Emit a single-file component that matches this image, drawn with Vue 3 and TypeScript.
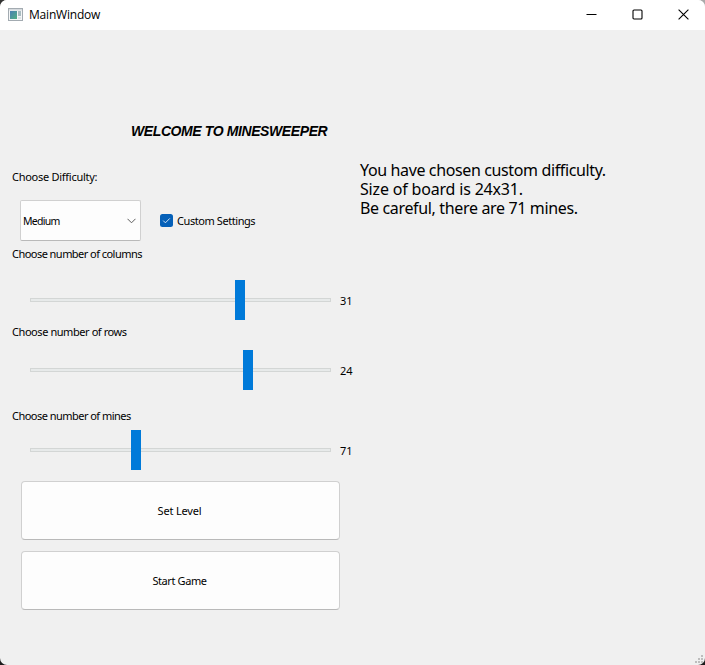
<script setup lang="ts">
import { computed, ref } from 'vue'

interface Slider {
  id: string
  label: string
  value: number
  ratio: number
}

const sliders = ref<Slider[]>([
  { id: 'columns', label: 'Choose number of columns', value: 31, ratio: 205 / 291 },
  { id: 'rows', label: 'Choose number of rows', value: 24, ratio: 213 / 291 },
  { id: 'mines', label: 'Choose number of mines', value: 71, ratio: 101 / 291 },
])

const summary = computed(() => [
  'You have chosen custom difficulty.',
  `Size of board is ${sliders.value[1].value}x${sliders.value[0].value}.`,
  `Be careful, there are ${sliders.value[2].value} mines.`,
])

const handleOffset = (s: Slider) => ({ left: `${Math.round(s.ratio * 291)}px` })
</script>

<template>
  <div class="desktop">
    <div class="window">
      <header class="titlebar">
        <svg class="app-icon" width="15" height="13" viewBox="0 0 15 13">
          <defs>
            <linearGradient id="pane" x1="0" y1="0" x2="1" y2="1">
              <stop offset="0" stop-color="#4a80b4" />
              <stop offset="1" stop-color="#52b082" />
            </linearGradient>
          </defs>
          <rect x="0.5" y="0.5" width="14" height="12" fill="#f4f6f7" stroke="#a3abb1" />
          <rect x="1" y="1" width="13" height="1.5" fill="#d5dade" />
          <rect x="2" y="3" width="7" height="8" fill="url(#pane)" />
          <rect x="10" y="3" width="3" height="5" fill="#a9bcc0" />
          <rect x="10" y="9" width="3" height="2" fill="#dde3e5" />
        </svg>
        <span class="caption">MainWindow</span>
        <svg class="control" width="11" height="11" viewBox="0 0 11 11">
          <path d="M0.5 5.5H10.5" stroke="#000" fill="none" />
        </svg>
        <svg class="control" width="11" height="11" viewBox="0 0 11 11">
          <rect x="1" y="1" width="9" height="9" rx="1" stroke="#000" stroke-width="1.1" fill="none" />
        </svg>
        <svg class="control" width="11" height="11" viewBox="0 0 11 11">
          <path d="M0.6 0.6L10.4 10.4M10.4 0.6L0.6 10.4" stroke="#000" stroke-width="1.1" fill="none" />
        </svg>
      </header>

      <main class="content">
        <section class="settings">
          <h1 class="heading">WELCOME TO MINESWEEPER</h1>
          <div class="label difficulty">Choose Difficulty:</div>
          <div class="choices">
            <div class="combo">
              <span class="combo-text">Medium</span>
              <svg width="9" height="6" viewBox="0 0 9 6">
                <path d="M0.5 0.8L4.5 4.8L8.5 0.8" stroke="#5c5c5c" fill="none" />
              </svg>
            </div>
            <div class="check">
              <svg width="13" height="13" viewBox="0 0 13 13">
                <rect width="13" height="13" rx="2.5" fill="#0560b8" />
                <path d="M3.2 6.6L5.4 8.8L9.8 4.4" stroke="#e3eefa" stroke-width="0.9" fill="none" />
              </svg>
              <span class="check-text">Custom Settings</span>
            </div>
          </div>
          <div v-for="s in sliders" :key="s.id" class="field" :class="s.id">
            <div class="label">{{ s.label }}</div>
            <div class="slider-row">
              <div class="slider">
                <div class="groove"></div>
                <div class="handle" :style="handleOffset(s)"></div>
              </div>
              <span class="value">{{ s.value }}</span>
            </div>
          </div>
          <button class="button set" type="button">Set Level</button>
          <button class="button start" type="button">Start Game</button>
        </section>
        <section class="summary">
          <div v-for="(line, i) in summary" :key="i" :class="'line' + i">{{ line }}</div>
        </section>
      </main>
      <svg class="grip" width="8" height="8" viewBox="0 0 8 8" fill="#bdbdbd">
        <path d="M6 0h2v2H6zM3 3h2v2H3zM6 3h2v2H6zM0 6h2v2H0zM3 6h2v2H3zM6 6h2v2H6z" />
      </svg>
    </div>
  </div>
</template>

<style>
body {
  background: #222;
}
</style>

<style scoped>
.desktop {
  width: 705px;
  height: 665px;
  background: linear-gradient(90deg, #333 50%, #aaa 50%) top / 100% 20px no-repeat, #1c1c1c;
}
.window {
  position: relative;
  width: 705px;
  height: 665px;
  display: flex;
  flex-direction: column;
  overflow: hidden;
  border-radius: 7px;
  background: #f0f0f0;
  color: #000;
  font-family: "Noto Sans", "Open Sans", sans-serif;
  font-size: 11px;
  white-space: nowrap;
}
.titlebar {
  display: flex;
  align-items: center;
  height: 30px;
  padding: 0 16px 2px 8px;
  box-sizing: border-box;
  background: #fff;
}
.app-icon {
  margin-right: 6px;
}
.caption {
  flex: 1;
  font-family: "Open Sans", sans-serif;
  font-size: 12px;
  line-height: 16px;
  letter-spacing: -0.2px;
  padding-top: 1px;
}
.control + .control {
  margin-left: 35px;
}
.content {
  flex: 1;
  display: grid;
  grid-template-columns: 360px 1fr;
}
.settings {
  display: flex;
  flex-direction: column;
  padding-top: 91px;
}
.heading {
  margin: 0 0 0 131px;
  height: 20px;
  font: italic bold 14px/20px "Liberation Sans", Arial, sans-serif;
  letter-spacing: -0.4px;
}
.label {
  height: 14px;
  line-height: 14px;
  padding-left: 12px;
}
.difficulty {
  margin-top: 29px;
  letter-spacing: -0.27px;
}
.columns .label {
  letter-spacing: -0.54px;
}
.rows .label {
  letter-spacing: -0.43px;
}
.mines .label {
  letter-spacing: -0.53px;
}
.choices {
  display: flex;
  align-items: center;
  height: 41px;
  margin: 16px 0 0 20px;
}
.combo {
  display: flex;
  align-items: center;
  justify-content: space-between;
  width: 121px;
  height: 41px;
  padding: 0 4px 0 2px;
  box-sizing: border-box;
  border: 1px solid #d0d0d0;
  border-bottom-color: #b9b9b9;
  border-radius: 2px;
  background: #fdfdfd;
}
.combo-text {
  font-size: 10.5px;
  letter-spacing: -0.7px;
}
.check {
  display: flex;
  align-items: center;
  gap: 4px;
  margin-left: 19px;
}
.check-text {
  letter-spacing: -0.43px;
}
.columns {
  margin-top: 6px;
}
.rows {
  margin-top: 5px;
}
.mines {
  margin-top: 19px;
}
.slider-row {
  display: flex;
  align-items: center;
  height: 40px;
  padding-left: 30px;
}
.columns .slider-row {
  margin-top: 19px;
}
.rows .slider-row {
  margin-top: 11px;
}
.mines .slider-row {
  margin-top: 7px;
}
.slider {
  position: relative;
  display: flex;
  align-items: center;
  width: 301px;
  height: 40px;
  margin-right: 9px;
}
.groove {
  width: 100%;
  height: 4px;
  box-sizing: border-box;
  border: 1px solid #d3d6d5;
  background: #e7eaea;
}
.handle {
  position: absolute;
  top: 0;
  width: 10px;
  height: 40px;
  background: #007ad9;
}
.value {
  line-height: 16px;
  padding-top: 1px;
}
.button {
  width: 319px;
  height: 59px;
  margin: 11px 0 0 21px;
  padding: 0 2px 0 0;
  border: 1px solid #d0d0d0;
  border-bottom-color: #b9b9b9;
  border-radius: 4px;
  background: #fdfdfd;
  color: #000;
  font: inherit;
}
.set {
  letter-spacing: -0.17px;
}
.start {
  letter-spacing: -0.4px;
}
.summary {
  padding-top: 131px;
  font-size: 16px;
  line-height: 19px;
}
.line0 {
  letter-spacing: -0.37px;
}
.line1 {
  letter-spacing: -0.18px;
}
.line2 {
  letter-spacing: -0.35px;
}
.grip {
  position: absolute;
  right: 2px;
  bottom: 2px;
}
</style>
